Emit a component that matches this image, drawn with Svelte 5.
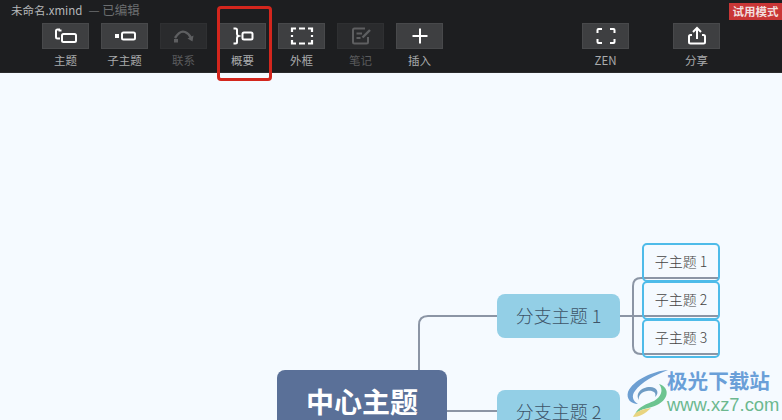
<script>
const leftTools = [
  { label: '主题', icon: 'topic' },
  { label: '子主题', icon: 'sub' },
  { label: '联系', icon: 'rel', off: true },
  { label: '概要', icon: 'summary' },
  { label: '外框', icon: 'frame' },
  { label: '笔记', icon: 'note', off: true },
  { label: '插入', icon: 'plus' }
];
const subs = ['子主题 1', '子主题 2', '子主题 3'];
</script>

{#snippet icon(name)}
  <svg width="24" height="20" viewBox="0 0 24 20" fill="none" stroke="currentColor" stroke-width="2">
    {#if name === 'topic'}
      <path d="M6 3.500H3.500Q2 3.500 2 5V11Q2 12.500 3.500 12.500H6" />
      <path d="M6 3.500V5.500" stroke-width="3" />
      <rect x="8" y="8" width="14" height="8" rx="1.500" />
    {:else if name === 'sub'}
      <rect x="2" y="8" width="4" height="4" fill="currentColor" stroke="none" />
      <rect x="9" y="6.500" width="13" height="7" rx="1.500" />
    {:else if name === 'rel'}
      <path d="M3 12Q8 4 13 6Q17 7.500 19 12" stroke-width="2.400" />
      <path d="M15.500 12.500L20.500 15.500L21.500 9.500Z" fill="currentColor" stroke="none" />
      <rect x="2" y="13" width="4" height="3.500" fill="currentColor" stroke="none" />
    {:else if name === 'summary'}
      <path d="M2.500 2.500H4.500Q6 2.500 6 4V8Q6 9.500 7.500 10Q6 10.500 6 12V16Q6 17.500 4.500 17.500H2.500" />
      <rect x="11.500" y="6.500" width="10" height="7" rx="1.500" />
    {:else if name === 'frame'}
      <path d="M2 6V2.500H6M9 2.500H15M18 2.500H22V6M22 9V11M22 14V17.500H18M15 17.500H9M6 17.500H2V14M2 11V9" stroke-width="2.200" />
    {:else if name === 'note'}
      <path d="M19 11V16Q19 17.500 17.500 17.500H5.500Q4 17.500 4 16V4Q4 2.500 5.500 2.500H16" />
      <path d="M7.500 7.500H13M7.500 12H11.500" />
      <path d="M13.500 11.500L21 4" stroke-width="2.400" />
    {:else if name === 'plus'}
      <path d="M12 2.500V17.500M4.500 10H19.500" />
    {:else if name === 'zen'}
      <path d="M8 3H4.500Q3.500 3 3.500 4V7M16 3H19.500Q20.500 3 20.500 4V7M3.500 13V16Q3.500 17 4.500 17H8M20.500 13V16Q20.500 17 19.500 17H16" />
    {:else if name === 'share'}
      <path d="M7 9H5.500Q4 9 4 10.500V16Q4 17.500 5.500 17.500H18.500Q20 17.500 20 16V10.500Q20 9 18.500 9H17" />
      <path d="M12 13V2.500M8 6L12 2L16 6" />
    {/if}
  </svg>
{/snippet}

{#snippet tool(t)}
  <div class="tool" class:off={t.off}>
    <div class="btn">{@render icon(t.icon)}</div>
    <span>{t.label}</span>
  </div>
{/snippet}

<div class="page">
  <header>
    <div class="title">
      <b>未命名.xmind</b>
      <i>— 已编辑</i>
    </div>
    <div class="badge">试用模式</div>
    <div class="tools">
      <div class="group">
        {#each leftTools as t}
          {@render tool(t)}
        {/each}
      </div>
      {@render tool({ label: 'ZEN', icon: 'zen' })}
      {@render tool({ label: '分享', icon: 'share' })}
    </div>
    <div class="mark"></div>
  </header>

  <main>
    <svg class="lines" width="782" height="347" viewBox="0 73 782 347" fill="none" stroke="#8b95a5" stroke-width="2">
      <path d="M419 371V325Q419 316 428 316H498" />
      <path d="M446 411H498" />
      <path d="M619 316H643" />
      <path d="M644 278H641Q633 278 633 286V346Q633 354 641 354H644" />
    </svg>

    <div class="node center">中心主题</div>
    <div class="node branch b1">分支主题 1</div>
    <div class="node branch b2">分支主题 2</div>
    {#each subs as s, i}
      <div class="node subnode" style="top: {170 + i * 38}px">{s}</div>
    {/each}

    <div class="wm">
      <svg width="50" height="50" viewBox="0 0 50 50" fill="none">
        <path d="M43 2C28 3 8 12 3 24C1 31 6 36 13 36C8 33 6 28 10 23C16 14 30 7 43 2Z" fill="#6d9fd2" />
        <path d="M14 32C10 26 16 19 25 19C32 19 35 25 30 29C32 24 27 22 22 23C16 24 13 28 14 32Z" fill="#6f9cc4" />
        <path d="M34 16C46 20 43 32 32 37C24 41 16 40 10 46C14 38 22 36 29 33C36 29 39 22 34 16Z" fill="#6cc490" />
        <path d="M8 49C10 43 18 41 26 40C20 46 14 49 8 49Z" fill="#e8d480" />
      </svg>
      <div class="wm-text">
        <strong>极光下载站</strong>
        <em>www.xz7.com</em>
      </div>
    </div>
  </main>
</div>

<style>
  :global(body) {
    margin: 0;
    overflow: hidden;
  }

  .page {
    position: relative;
    width: 782px;
    height: 420px;
    overflow: hidden;
    font-family: "Noto Sans CJK SC", "Noto Sans", sans-serif;
    background: #f5faff;
  }

  header {
    position: relative;
    height: 73px;
    box-sizing: border-box;
    background: #1d1e20;
    border-bottom: 1px solid #2a2b2d;
  }

  .title {
    display: flex;
    gap: 6px;
    height: 23px;
    padding: 2px 0 0 11px;
    box-sizing: border-box;
    font-size: 11.500px;
    line-height: 16px;
    white-space: nowrap;
  }

  .title b {
    font-weight: 400;
    color: #b4b6b8;
  }

  .title i {
    font-style: normal;
    font-size: 12.500px;
    color: #6c6e70;
  }

  .badge {
    position: absolute;
    top: 3px;
    right: 0;
    width: 53px;
    height: 17px;
    background: #c93636;
    color: #f2dede;
    font-size: 11.500px;
    font-weight: 700;
    line-height: 17px;
    text-align: center;
    white-space: nowrap;
  }

  .tools {
    display: flex;
    gap: 44px;
    padding-left: 42px;
  }

  .group {
    display: flex;
    gap: 12px;
    margin-right: 95px;
  }

  .tool {
    display: flex;
    flex-direction: column;
    align-items: center;
    width: 47px;
    color: #fff;
  }

  .tool span {
    margin-top: 3px;
    font-size: 11.500px;
    line-height: 16px;
    color: #a9abad;
    white-space: nowrap;
  }

  .btn {
    display: flex;
    align-items: center;
    justify-content: center;
    width: 47px;
    height: 26px;
    box-sizing: border-box;
    background: #3e3f41;
    border: 1px solid #48494b;
  }

  .tool.off {
    color: #5e5f61;
  }

  .tool.off span {
    color: #5a5b5d;
  }

  .tool.off .btn {
    background: #2a2b2d;
    border-color: #2f3032;
  }

  .mark {
    position: absolute;
    left: 217px;
    top: 6px;
    width: 55px;
    height: 75px;
    box-sizing: border-box;
    border: 3px solid #d3261d;
    border-radius: 4px;
    z-index: 2;
  }

  main {
    position: relative;
    height: 347px;
  }

  .lines {
    position: absolute;
    left: 0;
    top: 0;
  }

  .node {
    position: absolute;
    display: flex;
    align-items: center;
    justify-content: center;
    box-sizing: border-box;
  }

  .center {
    left: 277px;
    top: 297px;
    width: 170px;
    height: 66px;
    padding-bottom: 4px;
    background: #5a7098;
    border-radius: 8px;
    color: #fff;
    font-size: 28px;
    font-weight: 700;
  }

  .branch {
    left: 497px;
    width: 123px;
    height: 44px;
    padding-bottom: 2px;
    background: #93cfe6;
    border-radius: 8px;
    color: #3e5468;
    font-size: 18px;
    font-weight: 300;
    white-space: nowrap;
  }

  .b1 { top: 221px; }
  .b2 { top: 317px; }

  .subnode {
    left: 642px;
    width: 78px;
    height: 39px;
    border: 2px solid #4ebbe9;
    border-radius: 5px;
    color: #444;
    font-size: 14px;
    font-weight: 300;
    white-space: nowrap;
    padding-bottom: 3px;
    background: linear-gradient(#8b95a5, #8b95a5) no-repeat left 0 bottom 1px / 74px 2px;
  }

  .wm {
    position: absolute;
    left: 625px;
    top: 294px;
    display: flex;
    color: #5b96d6;
  }

  .wm svg {
    margin-top: 1px;
  }

  .wm-text {
    display: flex;
    flex-direction: column;
    margin-left: -8px;
  }

  .wm-text strong {
    font-size: 20.600px;
    line-height: 27px;
    font-weight: 700;
    color: #6a9fd8;
    white-space: nowrap;
  }

  .wm-text em {
    margin-top: 2px;
    font-style: normal;
    font-family: "Liberation Sans", sans-serif;
    font-size: 18.400px;
    line-height: 18px;
    color: #6cb88f;
    white-space: nowrap;
  }
</style>
